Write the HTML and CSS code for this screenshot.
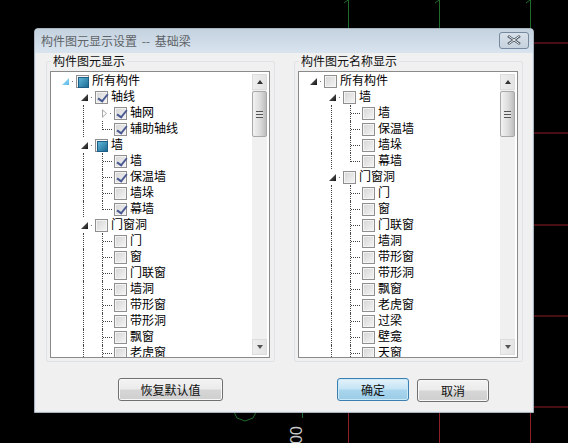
FILE: index.html
```html
<!DOCTYPE html>
<html lang="zh">
<head>
<meta charset="utf-8">
<title>构件图元显示设置</title>
<link rel="stylesheet" href="styles.css">
</head>
<body>
<div class="canvas">
  <svg class="cad" width="568" height="443" viewBox="0 0 568 443">
    <g stroke="#1f6b2a" fill="none">
      <path d="M348.5 0V28M439.5 0V28M530.5 0V28M344 3L348 0M435 3L439 0M526 3L530 0"/>
      <path d="M234 412L237 418L245 421L253 418L256 412" />
      <path d="M302.5 412V418"/>
    </g>
    <g stroke="#8e1f26" fill="none">
      <path d="M348.5 412V443M439.5 412V443M530.5 412V443"/>
      <path d="M533 43H568M533 133H568M533 225H568M533 316H568M533 407H568"/>
    </g>
  </svg>
  <div class="cad-label">00</div>

  <section class="dialog">
    <header class="titlebar">
      <span class="title">构件图元显示设置 -- 基础梁</span>
      <button class="close" aria-label="关闭">
        <svg width="16" height="10" viewBox="0 0 16 10"><path d="M2 1L14 9M14 1L2 9" stroke="#4c5662" stroke-width="2.6" fill="none"/><path d="M2.500 1L13.500 9M13.500 1L2.500 9" stroke="#f4f6f8" stroke-width="1" fill="none"/></svg>
      </button>
    </header>
    <div class="panels">
      <fieldset class="group">
        <legend>构件图元显示</legend>
        <div class="treebox">
          <div class="tree" id="tree-a">
            <div class="row"><i class="col exp on"></i><b class="cb part"></b><span>所有构件</span></div>
            <div class="row"><i class="col"></i><i class="col exp open"></i><b class="cb checked"></b><span>轴线</span></div>
            <div class="row"><i class="col"></i><i class="col v"></i><i class="col exp shut"></i><b class="cb checked"></b><span>轴网</span></div>
            <div class="row"><i class="col"></i><i class="col v"></i><i class="col elbow"></i><b class="cb checked"></b><span>辅助轴线</span></div>
            <div class="row"><i class="col"></i><i class="col exp open"></i><b class="cb part"></b><span>墙</span></div>
            <div class="row"><i class="col"></i><i class="col v"></i><i class="col tee"></i><b class="cb checked"></b><span>墙</span></div>
            <div class="row"><i class="col"></i><i class="col v"></i><i class="col tee"></i><b class="cb checked"></b><span>保温墙</span></div>
            <div class="row"><i class="col"></i><i class="col v"></i><i class="col tee"></i><b class="cb"></b><span>墙垛</span></div>
            <div class="row"><i class="col"></i><i class="col v"></i><i class="col elbow"></i><b class="cb checked"></b><span>幕墙</span></div>
            <div class="row"><i class="col"></i><i class="col exp open"></i><b class="cb"></b><span>门窗洞</span></div>
            <div class="row"><i class="col"></i><i class="col v"></i><i class="col tee"></i><b class="cb"></b><span>门</span></div>
            <div class="row"><i class="col"></i><i class="col v"></i><i class="col tee"></i><b class="cb"></b><span>窗</span></div>
            <div class="row"><i class="col"></i><i class="col v"></i><i class="col tee"></i><b class="cb"></b><span>门联窗</span></div>
            <div class="row"><i class="col"></i><i class="col v"></i><i class="col tee"></i><b class="cb"></b><span>墙洞</span></div>
            <div class="row"><i class="col"></i><i class="col v"></i><i class="col tee"></i><b class="cb"></b><span>带形窗</span></div>
            <div class="row"><i class="col"></i><i class="col v"></i><i class="col tee"></i><b class="cb"></b><span>带形洞</span></div>
            <div class="row"><i class="col"></i><i class="col v"></i><i class="col tee"></i><b class="cb"></b><span>飘窗</span></div>
            <div class="row"><i class="col"></i><i class="col v"></i><i class="col tee"></i><b class="cb"></b><span>老虎窗</span></div>
          </div>
          <div class="scrollbar">
            <div class="sb-btn"><i class="arrow up"></i></div>
            <div class="thumb"><i class="grip"></i></div>
            <div class="track"></div>
            <div class="sb-btn"><i class="arrow down"></i></div>
          </div>
        </div>
      </fieldset>
      <fieldset class="group">
        <legend>构件图元名称显示</legend>
        <div class="treebox">
          <div class="tree" id="tree-b">
            <div class="row"><i class="col exp open"></i><b class="cb"></b><span>所有构件</span></div>
            <div class="row"><i class="col"></i><i class="col exp open"></i><b class="cb"></b><span>墙</span></div>
            <div class="row"><i class="col"></i><i class="col v"></i><i class="col tee"></i><b class="cb"></b><span>墙</span></div>
            <div class="row"><i class="col"></i><i class="col v"></i><i class="col tee"></i><b class="cb"></b><span>保温墙</span></div>
            <div class="row"><i class="col"></i><i class="col v"></i><i class="col tee"></i><b class="cb"></b><span>墙垛</span></div>
            <div class="row"><i class="col"></i><i class="col v"></i><i class="col elbow"></i><b class="cb"></b><span>幕墙</span></div>
            <div class="row"><i class="col"></i><i class="col exp open"></i><b class="cb"></b><span>门窗洞</span></div>
            <div class="row"><i class="col"></i><i class="col v"></i><i class="col tee"></i><b class="cb"></b><span>门</span></div>
            <div class="row"><i class="col"></i><i class="col v"></i><i class="col tee"></i><b class="cb"></b><span>窗</span></div>
            <div class="row"><i class="col"></i><i class="col v"></i><i class="col tee"></i><b class="cb"></b><span>门联窗</span></div>
            <div class="row"><i class="col"></i><i class="col v"></i><i class="col tee"></i><b class="cb"></b><span>墙洞</span></div>
            <div class="row"><i class="col"></i><i class="col v"></i><i class="col tee"></i><b class="cb"></b><span>带形窗</span></div>
            <div class="row"><i class="col"></i><i class="col v"></i><i class="col tee"></i><b class="cb"></b><span>带形洞</span></div>
            <div class="row"><i class="col"></i><i class="col v"></i><i class="col tee"></i><b class="cb"></b><span>飘窗</span></div>
            <div class="row"><i class="col"></i><i class="col v"></i><i class="col tee"></i><b class="cb"></b><span>老虎窗</span></div>
            <div class="row"><i class="col"></i><i class="col v"></i><i class="col tee"></i><b class="cb"></b><span>过梁</span></div>
            <div class="row"><i class="col"></i><i class="col v"></i><i class="col tee"></i><b class="cb"></b><span>壁龛</span></div>
            <div class="row"><i class="col"></i><i class="col v"></i><i class="col tee"></i><b class="cb"></b><span>天窗</span></div>
          </div>
          <div class="scrollbar">
            <div class="sb-btn"><i class="arrow up"></i></div>
            <div class="thumb"><i class="grip"></i></div>
            <div class="track"></div>
            <div class="sb-btn"><i class="arrow down"></i></div>
          </div>
        </div>
      </fieldset>
    </div>
    <footer class="actions">
      <button class="btn reset">恢复默认值</button>
      <button class="btn primary">确定</button>
      <button class="btn cancel">取消</button>
    </footer>
  </section>
</div>
</body>
</html>
```

FILE: styles.css
```css
* { box-sizing: border-box; }
html, body { margin: 0; padding: 0; background: #000; }
body { font-family: "Noto Sans CJK SC", "Liberation Sans", sans-serif; font-size: 12px; color: #000; }

.canvas { position: relative; width: 568px; height: 443px; overflow: hidden; background: #000; }
.cad { position: absolute; left: 0; top: 0; }
.cad-label { position: absolute; left: 288px; top: 426px; color: #c8c8c8; font: 16px "Liberation Sans", sans-serif; transform: rotate(-90deg); }

.dialog {
  position: absolute; left: 34px; top: 28px; width: 500px; height: 385px;
  display: flex; flex-direction: column;
  background: #f0f0f0;
  border: 1px solid #a9b4bf;
  border-radius: 4px 4px 0 0;
  box-shadow: inset 0 0 0 1px #e4eaf0;
}
.titlebar {
  height: 24px; flex: none; display: flex; align-items: center; justify-content: space-between;
  padding: 0 4px 0 6px;
  background: linear-gradient(#c4d2df, #d9e4ef);
  border-radius: 3px 3px 0 0;
}
.title { color: #5f6468; font-size: 12px; line-height: 14px; word-spacing: 2px; }
.close {
  width: 30px; height: 17px; padding: 0; margin-top: -2px;
  display: flex; align-items: center; justify-content: center;
  background: linear-gradient(#d8e1ea, #c6d2de);
  border: 1px solid #76899e; border-radius: 3px;
}

.panels { flex: none; display: flex; gap: 19px; padding: 2px 0 0 11px; height: 315px; }
.group {
  margin: 0; padding: 0 3px 3px; width: 229px; height: 307px; min-width: 0;
  border: 1px solid #dfe3e6; border-radius: 2px;
  background: #f0f0f0;
}
.group legend { margin-left: 1px; padding: 0 2px; font-size: 12px; line-height: 12px; height: 12px; color: #111; }

.treebox {
  display: flex; height: 287px; width: 220px; margin-top: 4px;
  background: #fff; border: 1px solid #8a8a8a;
}
.tree { flex: 1; min-width: 0; height: 285px; padding: 1px 0 0 5px; overflow: hidden; }
.row { display: flex; align-items: center; height: 16px; white-space: nowrap; line-height: 16px; }
.row span { margin: 0 0 2px 3px; font-size: 12px; color: #000; }

.col { position: relative; display: block; flex: none; width: 19px; height: 16px; }
.v::before, .tee::before { content: ""; position: absolute; left: 8px; top: 0; height: 16px; border-left: 1px dotted #444; }
.tee::after, .elbow::after { content: ""; position: absolute; left: 9px; top: 8px; width: 9px; border-top: 1px dotted #444; }
.elbow::before { content: ""; position: absolute; left: 8px; top: 0; height: 9px; border-left: 1px dotted #444; }

.exp::after { content: ""; position: absolute; left: 16px; top: 8px; width: 1px; height: 1px; background: #777; }
.exp::before { content: ""; position: absolute; left: 6px; top: 5px; width: 7px; height: 7px; }
.open::before { background: linear-gradient(135deg, #777, #111); clip-path: polygon(100% 0, 100% 100%, 0 100%); }
.on::before { background: linear-gradient(135deg, #bfeefc, #4fb4e4); clip-path: polygon(100% 0, 100% 100%, 0 100%); box-shadow: none; }
.shut::before { left: 8px; top: 4px; width: 5px; height: 9px; background: #a8a8a8; clip-path: polygon(0 0, 100% 50%, 0 100%, 0 0, 1px 2px, 1px 7px, 4px 4.500px, 1px 2px); }

.cb {
  position: relative; display: block; flex: none; width: 13px; height: 13px; margin-left: 1px;
  border: 1px solid #8f8f8f; background: linear-gradient(135deg, #d4d4d4, #f6f6f6);
  box-shadow: inset 0 0 0 1px #f4f4f4;
}
.checked::after {
  content: ""; position: absolute; left: 4px; top: 0; width: 4px; height: 8px;
  border-right: 2px solid #4a5a92; border-bottom: 2px solid #4a5a92;
  transform: rotate(35deg) skewX(-4deg);
}
.part::after {
  content: ""; position: absolute; left: 1px; top: 1px; width: 9px; height: 9px;
  background: linear-gradient(135deg, #5fb6d8, #1c6a94);
  border: 1px solid #1d5f86;
}

.scrollbar { flex: none; width: 15px; height: 281px; margin: 2px 2px 0 0; display: flex; flex-direction: column; background: #f0f0f0; }
.sb-btn {
  flex: none; height: 16px; display: flex; align-items: center; justify-content: center;
  background: linear-gradient(90deg, #eee, #e4e4e4); border: 1px solid #dcdcdc;
}
.arrow { display: block; width: 0; height: 0; border-left: 3.500px solid transparent; border-right: 3.500px solid transparent; }
.arrow.up { border-bottom: 4px solid #333; }
.arrow.down { border-top: 4px solid #555; }
.thumb {
  flex: none; height: 46px; margin-top: 1px; display: flex; align-items: center; justify-content: center;
  background: linear-gradient(90deg, #f2f2f2, #dcdcdc 55%, #bdbdbd);
  border: 1px solid #a8a8a8; border-radius: 2px;
}
.grip { display: block; width: 7px; height: 7px; background: repeating-linear-gradient(#555 0 1px, #e4e4e4 1px 3px); }
.track { flex: 1; }

.actions { flex: none; display: flex; align-items: flex-start; padding: 10px 0 0 83px; }
.btn {
  height: 23px; padding: 0; font: 12px "Noto Sans CJK SC", sans-serif; color: #111;
  background: linear-gradient(#f3f3f3 0, #ebebeb 48%, #d6d6d6 52%, #cfcfcf);
  border: 1px solid #707070; border-radius: 3px; box-shadow: inset 0 0 0 1px #f8f8f8;
}
.reset { width: 105px; }
.primary { width: 72px; margin-left: 114px; border-color: #3c7fb1; background: linear-gradient(#e4f3fb, #c4e4f5 48%, #a9d6ee 52%, #9bcbe6); box-shadow: inset 0 0 0 1px #cbeaf8; }
.cancel { width: 72px; margin-left: 8px; margin-top: 1px; }
```
